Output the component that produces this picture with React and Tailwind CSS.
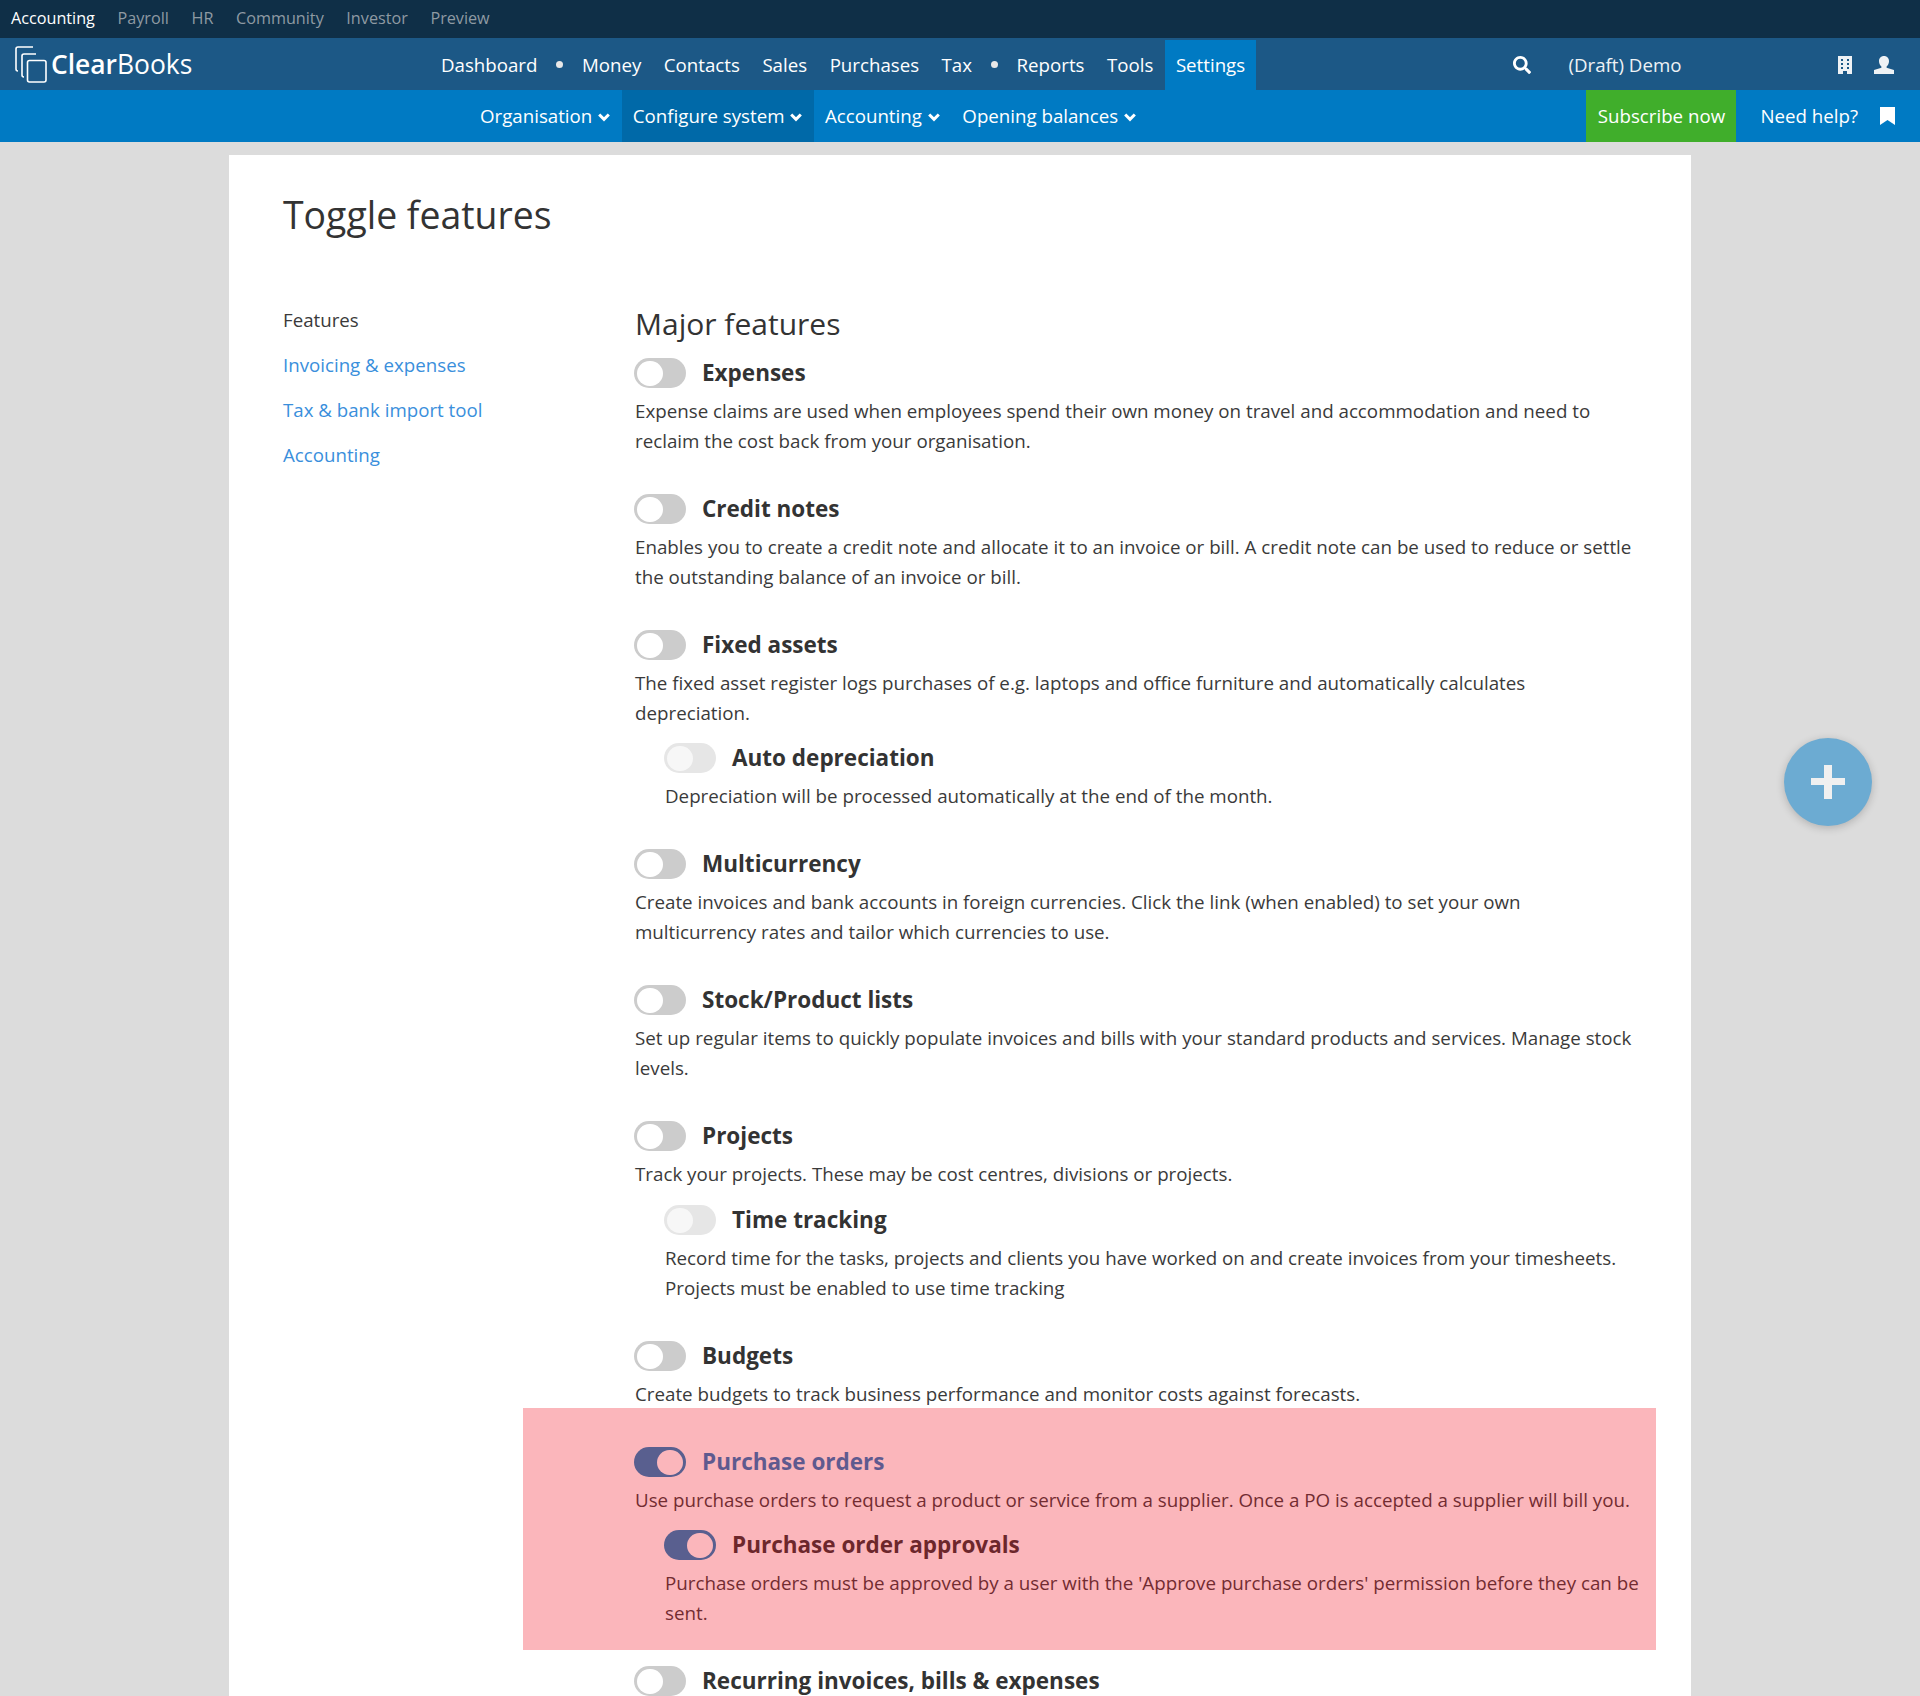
import React from "react";
import { FaSearch } from "react-icons/fa";

function Toggle({ on, sub }) {
  const track = on ? "bg-[#1883c1]" : sub ? "bg-[#e6e6e6]" : "bg-[#cccccc]";
  return (
    <span className={`-ml-px flex h-[30px] w-[52px] shrink-0 items-center rounded-full px-[3px] ${track} ${on ? "justify-end" : "justify-start"}`}>
      <span className={`h-[25px] w-[26px] rounded-full ${sub && !on ? "bg-[#f7f7f7]" : "bg-white"}`} />
    </span>
  );
}

function Feature({ title, desc, sub, wide, on, link, children }) {
  const outer = sub ? (wide ? "ml-[30px] mt-[11px]" : "ml-[30px] mt-[10px]") : "mb-[33px]";
  return (
    <div className={outer}>
      <div className="flex h-[40px] items-center gap-[16px]">
        <Toggle on={on} sub={sub} />
        <span className={`text-[22.5px] font-bold ${link ? "text-[#1f7cc0]" : "text-[#333]"}`}>{title}</span>
      </div>
      {desc && <p className="mt-[3px] text-[18.75px] leading-[30px] text-[#3a3a3a]">{desc}</p>}
      {children}
    </div>
  );
}

function NavItem({ children, active }) {
  return (
    <a className={`flex h-[50px] items-center px-[11.25px] text-[18.7px] text-white ${active ? "bg-[#007ac3]" : ""}`}>{children}</a>
  );
}
const Dot = () => (
  <span className="flex h-[50px] w-[22px] items-center justify-center pb-[2px]">
    <span className="h-[7px] w-[7px] rounded-full bg-[#e8e8e8]" />
  </span>
);

const Chevron = () => (
  <svg width="12" height="9" viewBox="0 0 12 9" fill="none" stroke="white" strokeWidth="3" className="mt-[3px] shrink-0">
    <path d="M1.2 1.5 6 6.3l4.8-4.8" />
  </svg>
);

function SubItem({ children, active }) {
  return (
    <a className={`flex h-[52px] items-center gap-[6px] px-[11.25px] text-[18.7px] text-white ${active ? "bg-[#0069a8]" : ""}`}>
      {children}
      <Chevron />
    </a>
  );
}

export default function App() {
  return (
    <div className="relative h-[1696px] overflow-hidden bg-[#dcdcdc] text-[#333]" style={{ fontFamily: '"Open Sans", sans-serif' }}>
      <div className="flex h-[38px] items-center gap-[22.6px] bg-[#0f2f47] pb-[2px] pl-[11px] text-[16.2px] text-[#8e9aa3]">
        <span className="text-white">Accounting</span>
        <span>Payroll</span>
        <span>HR</span>
        <span>Community</span>
        <span>Investor</span>
        <span>Preview</span>
      </div>

      <div className="flex h-[52px] items-end bg-[#1c5886]">
        <div className="flex h-[52px] w-[429.75px] shrink-0 items-center pl-[15px]">
          <svg width="32" height="37" viewBox="0 0 32 37" fill="none" stroke="white" strokeWidth="1.6" className="shrink-0">
            <path d="M18 1H3a2 2 0 0 0-2 2v20a2 2 0 0 0 2 2" />
            <path d="M21 8H9a2 2 0 0 0-2 2v19a2 2 0 0 0 2 2" />
            <rect x="12.5" y="14.5" width="18.5" height="21.5" rx="2" />
          </svg>
          <span className="ml-[4px] text-[26.4px] leading-none text-white">
            <span className="font-semibold">Clear</span>Books
          </span>
        </div>
        <NavItem>Dashboard</NavItem>
        <Dot />
        <NavItem>Money</NavItem>
        <NavItem>Contacts</NavItem>
        <NavItem>Sales</NavItem>
        <NavItem>Purchases</NavItem>
        <NavItem>Tax</NavItem>
        <Dot />
        <NavItem>Reports</NavItem>
        <NavItem>Tools</NavItem>
        <NavItem active>Settings</NavItem>
        <div className="flex h-[50px] flex-1 items-center text-[18.7px] text-[#eef2f5]">
          <FaSearch className="ml-[257px] h-[18px] w-[18px] text-white" />
          <span className="ml-[37px]">(Draft) Demo</span>
          <svg width="14" height="18" viewBox="0 0 14 18" className="ml-[157px] shrink-0">
            <path fillRule="evenodd" fill="#eef2f5" d="M0 0h14v18H9v-3H5v3H0zM3 3v2h2V3zm6 0v2h2V3zM3 7v2h2V7zm6 0v2h2V7zM3 11v2h2v-2zm6 0v2h2v-2z" />
          </svg>
          <svg width="20" height="18" viewBox="0 0 20 18" className="ml-[22px] shrink-0">
            <path fill="#eef2f5" d="M10 0c3 0 5 2.2 5 5.2 0 2.2-1 4.2-2.4 5.3v1.3L20 14v4H0v-4l7.4-2.2v-1.3C6 9.4 5 7.4 5 5.2 5 2.2 7 0 10 0z" />
          </svg>
        </div>
      </div>

      <div className="flex h-[52px] items-center bg-[#007ac3] pl-[468.75px]">
        <SubItem>Organisation</SubItem>
        <SubItem active>Configure system</SubItem>
        <SubItem>Accounting</SubItem>
        <SubItem>Opening balances</SubItem>
        <a className="ml-auto flex h-[52px] w-[150px] items-center justify-center bg-[#40ae2b] text-[18.7px] text-white">Subscribe now</a>
        <span className="ml-[24px] text-[18.7px] text-white">Need help?</span>
        <svg width="15" height="18" viewBox="0 0 15 18" className="ml-[22px] mr-[25px] shrink-0">
          <path fill="white" d="M0 0h15v18l-7.5-5L0 18z" />
        </svg>
      </div>

      <main className="mx-auto mt-[13px] w-[1462px] bg-white pl-[54px]">
        <h1 className="pt-[32px] text-[37.4px] leading-[56px] text-[#333]">Toggle features</h1>
        <div className="mt-[55px] flex">
          <nav className="flex w-[352px] shrink-0 flex-col text-[18.7px]">
            <a className="flex h-[45px] items-center text-[#3a3a3a]">Features</a>
            <a className="flex h-[45px] items-center text-[#3a8fdc]">Invoicing &amp; expenses</a>
            <a className="flex h-[45px] items-center text-[#3a8fdc]">Tax &amp; bank import tool</a>
            <a className="flex h-[45px] items-center text-[#3a8fdc]">Accounting</a>
          </nav>
          <div className="w-[1005px]">
            <h2 className="mb-[5px] pt-[2px] text-[30px] leading-[48px] text-[#333]">Major features</h2>
            <Feature title="Expenses" desc="Expense claims are used when employees spend their own money on travel and accommodation and need to reclaim the cost back from your organisation." />
            <Feature title="Credit notes" desc="Enables you to create a credit note and allocate it to an invoice or bill. A credit note can be used to reduce or settle the outstanding balance of an invoice or bill." />
            <Feature title="Fixed assets" desc="The fixed asset register logs purchases of e.g. laptops and office furniture and automatically calculates depreciation.">
              <Feature sub title="Auto depreciation" desc="Depreciation will be processed automatically at the end of the month." />
            </Feature>
            <Feature title="Multicurrency" desc="Create invoices and bank accounts in foreign currencies. Click the link (when enabled) to set your own multicurrency rates and tailor which currencies to use." />
            <Feature title="Stock/Product lists" desc="Set up regular items to quickly populate invoices and bills with your standard products and services. Manage stock levels." />
            <Feature title="Projects" desc="Track your projects. These may be cost centres, divisions or projects.">
              <Feature sub wide title="Time tracking" desc="Record time for the tasks, projects and clients you have worked on and create invoices from your timesheets. Projects must be enabled to use time tracking" />
            </Feature>
            <Feature title="Budgets" desc="Create budgets to track business performance and monitor costs against forecasts." />
            <div className="relative">
              <Feature on link title="Purchase orders" desc="Use purchase orders to request a product or service from a supplier. Once a PO is accepted a supplier will bill you.">
                <Feature on sub title="Purchase order approvals" desc="Purchase orders must be approved by a user with the 'Approve purchase orders' permission before they can be sent." />
              </Feature>
              <div className="absolute -left-[112px] -top-[34px] -right-[16px] bottom-[-22px] bg-[rgba(243,13,30,0.3)]" />
            </div>
            <Feature title="Recurring invoices, bills &amp; expenses" />
          </div>
        </div>
      </main>

      <button className="absolute left-[1784px] top-[738px] flex h-[88px] w-[88px] items-center justify-center rounded-full bg-[#6cabd2] shadow-[0_2px_8px_rgba(0,0,0,0.2)]">
        <svg width="34" height="34" viewBox="0 0 34 34"><path d="M13 0h8v13h13v7H21v14h-8V20H0v-7h13z" fill="#f0f0f0" /></svg>
      </button>
    </div>
  );
}
